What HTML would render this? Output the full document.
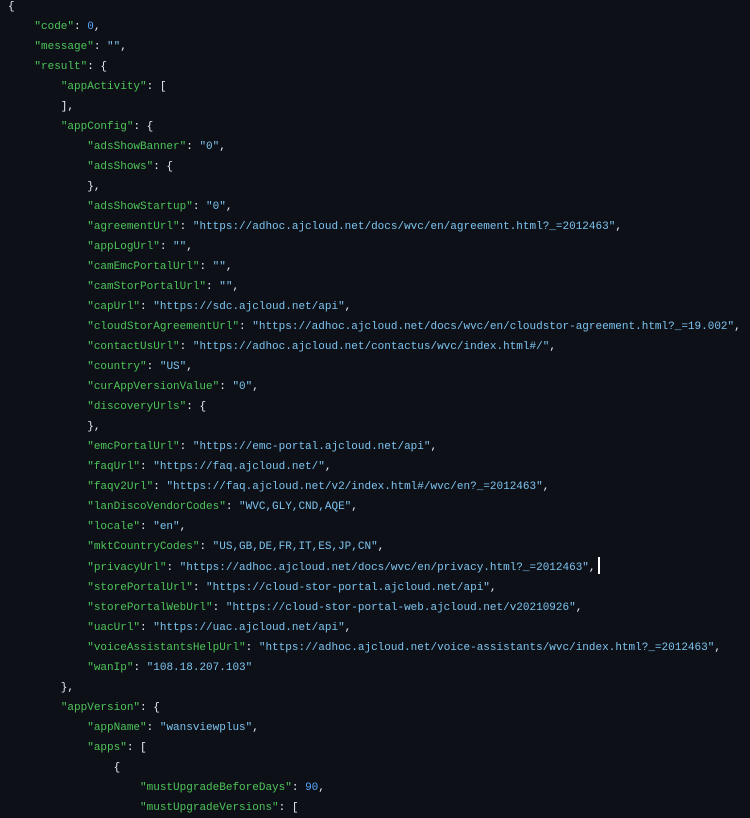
<!DOCTYPE html>
<html><head><meta charset="utf-8"><style>
html,body{margin:0;padding:0;background:#0d1117;width:750px;height:812px;overflow:hidden}
pre{margin:0;padding:-3px 0 0 0;position:absolute;top:-3px;left:8px;font-family:"Liberation Mono",monospace;font-size:11px;line-height:20px;color:#e6edf3;white-space:pre}
.k{color:#4ec45a}.s{color:#7ec3ef}.n{color:#58a6ff}
.c{display:inline-block;width:2px;height:17px;background:#fff;vertical-align:-4px;margin-left:2px}
</style></head><body><pre>{
    <span class="k">"code"</span>: <span class="n">0</span>,
    <span class="k">"message"</span>: <span class="s">""</span>,
    <span class="k">"result"</span>: {
        <span class="k">"appActivity"</span>: [
        ],
        <span class="k">"appConfig"</span>: {
            <span class="k">"adsShowBanner"</span>: <span class="s">"0"</span>,
            <span class="k">"adsShows"</span>: {
            },
            <span class="k">"adsShowStartup"</span>: <span class="s">"0"</span>,
            <span class="k">"agreementUrl"</span>: <span class="s">"https://adhoc.ajcloud.net/docs/wvc/en/agreement.html?_=2012463"</span>,
            <span class="k">"appLogUrl"</span>: <span class="s">""</span>,
            <span class="k">"camEmcPortalUrl"</span>: <span class="s">""</span>,
            <span class="k">"camStorPortalUrl"</span>: <span class="s">""</span>,
            <span class="k">"capUrl"</span>: <span class="s">"https://sdc.ajcloud.net/api"</span>,
            <span class="k">"cloudStorAgreementUrl"</span>: <span class="s">"https://adhoc.ajcloud.net/docs/wvc/en/cloudstor-agreement.html?_=19.002"</span>,
            <span class="k">"contactUsUrl"</span>: <span class="s">"https://adhoc.ajcloud.net/contactus/wvc/index.html#/"</span>,
            <span class="k">"country"</span>: <span class="s">"US"</span>,
            <span class="k">"curAppVersionValue"</span>: <span class="s">"0"</span>,
            <span class="k">"discoveryUrls"</span>: {
            },
            <span class="k">"emcPortalUrl"</span>: <span class="s">"https://emc-portal.ajcloud.net/api"</span>,
            <span class="k">"faqUrl"</span>: <span class="s">"https://faq.ajcloud.net/"</span>,
            <span class="k">"faqv2Url"</span>: <span class="s">"https://faq.ajcloud.net/v2/index.html#/wvc/en?_=2012463"</span>,
            <span class="k">"lanDiscoVendorCodes"</span>: <span class="s">"WVC,GLY,CND,AQE"</span>,
            <span class="k">"locale"</span>: <span class="s">"en"</span>,
            <span class="k">"mktCountryCodes"</span>: <span class="s">"US,GB,DE,FR,IT,ES,JP,CN"</span>,
            <span class="k">"privacyUrl"</span>: <span class="s">"https://adhoc.ajcloud.net/docs/wvc/en/privacy.html?_=2012463"</span>,<span class="c"></span>
            <span class="k">"storePortalUrl"</span>: <span class="s">"https://cloud-stor-portal.ajcloud.net/api"</span>,
            <span class="k">"storePortalWebUrl"</span>: <span class="s">"https://cloud-stor-portal-web.ajcloud.net/v20210926"</span>,
            <span class="k">"uacUrl"</span>: <span class="s">"https://uac.ajcloud.net/api"</span>,
            <span class="k">"voiceAssistantsHelpUrl"</span>: <span class="s">"https://adhoc.ajcloud.net/voice-assistants/wvc/index.html?_=2012463"</span>,
            <span class="k">"wanIp"</span>: <span class="s">"108.18.207.103"</span>
        },
        <span class="k">"appVersion"</span>: {
            <span class="k">"appName"</span>: <span class="s">"wansviewplus"</span>,
            <span class="k">"apps"</span>: [
                {
                    <span class="k">"mustUpgradeBeforeDays"</span>: <span class="n">90</span>,
                    <span class="k">"mustUpgradeVersions"</span>: [
</pre></body></html>
